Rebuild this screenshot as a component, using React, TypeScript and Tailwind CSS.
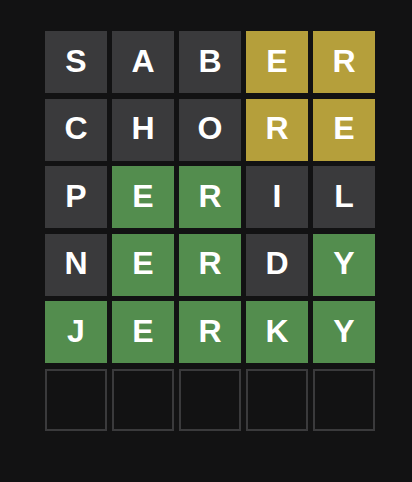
import * as React from "react";

type TileState = "absent" | "present" | "correct" | "empty";

const rows: { letters: string; states: TileState[] }[] = [
  { letters: "SABER", states: ["absent", "absent", "absent", "present", "present"] },
  { letters: "CHORE", states: ["absent", "absent", "absent", "present", "present"] },
  { letters: "PERIL", states: ["absent", "correct", "correct", "absent", "absent"] },
  { letters: "NERDY", states: ["absent", "correct", "correct", "absent", "correct"] },
  { letters: "JERKY", states: ["correct", "correct", "correct", "correct", "correct"] },
  { letters: "     ", states: ["empty", "empty", "empty", "empty", "empty"] },
];

const stateClasses: Record<TileState, string> = {
  absent: "bg-[#3a3a3c]",
  present: "bg-[#b59f3b]",
  correct: "bg-[#538d4e]",
  empty: "border-2 border-[#3a3a3c]",
};

const Tile: React.FC<{ letter: string; state: TileState }> = ({ letter, state }) => (
  <div
    className={`flex items-center justify-center w-[62px] h-[62px] ${stateClasses[state]}`}
  >
    <span className="text-white text-[32px] font-bold leading-none -mt-[3px] uppercase">
      {letter.trim()}
    </span>
  </div>
);

export default function App() {
  return (
    <div
      className="w-[412px] h-[482px] bg-[#121213] pl-[45px] pt-[31px]"
      style={{ fontFamily: '"Liberation Sans", Arial, sans-serif' }}
    >
      <div className="grid grid-cols-[repeat(5,62px)] auto-rows-[62px] gap-x-[5px] gap-y-[5.6px]">
        {rows.map((row, r) =>
          row.states.map((s, c) => (
            <Tile key={`${r}-${c}`} letter={row.letters[c]} state={s} />
          ))
        )}
      </div>
    </div>
  );
}
